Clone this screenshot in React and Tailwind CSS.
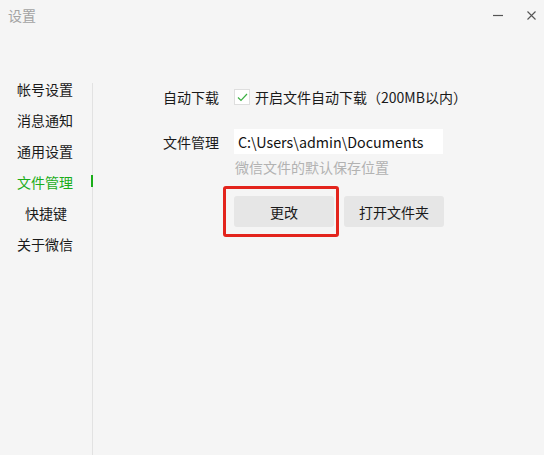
import React from "react";

const menu = [
  { label: "帐号设置" },
  { label: "消息通知" },
  { label: "通用设置" },
  { label: "文件管理", active: true },
  { label: "快捷键", indent: true },
  { label: "关于微信" },
];

const Sidebar = () => {
  return (
    <div className="w-[92px] pt-[43px] flex flex-col">
      {menu.map((item) => (
        <div
          key={item.label}
          className={
            "relative h-[31px] flex items-center " +
            (item.indent ? "pl-[25px] " : "pl-[17px] ") +
            (item.active ? "text-[#1aad19]" : "text-[#1a1a1a]")
          }
        >
          {item.label}
          {item.active && (
            <span className="absolute right-[-1px] top-[9px] w-[2px] h-[12px] bg-[#1aad19]" />
          )}
        </div>
      ))}
    </div>
  );
};

const App = () => {
  return (
    <div className="w-[544px] h-[455px] bg-[#f5f5f5] flex flex-col overflow-hidden text-[14px] leading-[20px] text-[#1a1a1a] font-['Noto_Sans_CJK_SC',sans-serif]">
      <div className="h-[30px] flex items-center justify-between pl-[8px] pr-[8px]">
        <span className="text-[#a3a3a3] -mt-[1px]">设置</span>
        <div className="flex items-center gap-[24px]">
          <svg width="10" height="10" viewBox="0 0 10 10">
            <path d="M0 5.5H10" stroke="#555" strokeWidth="1.2" />
          </svg>
          <svg width="9" height="9" viewBox="0 0 9 9">
            <path d="M0.5 0.5L8.5 8.5M8.5 0.5L0.5 8.5" stroke="#555" strokeWidth="1.1" />
          </svg>
        </div>
      </div>

      <div className="flex flex-1">
        <Sidebar />
        <div className="w-px bg-[#e2e2e2] mt-[53px]" />

        <div className="pl-[70px] pt-[57px] flex flex-col">
          <div className="flex items-center h-[20px]">
            <span className="w-[71px]">自动下载</span>
            <span className="w-[16px] h-[16px] bg-white border border-[#dedede] flex items-center justify-center">
              <svg width="11" height="9" viewBox="0 0 11 9">
                <path d="M1 4.5L4 7.5L10 1" stroke="#3cb043" strokeWidth="1.2" fill="none" />
              </svg>
            </span>
            <span className="ml-[5px]">开启文件自动下载（200MB以内）</span>
          </div>

          <div className="flex items-center mt-[22px]">
            <span className="w-[71px]">文件管理</span>
            <div className="w-[209px] h-[25px] bg-white flex items-center pl-[4px] text-[14.3px] text-[#111]">
              C:\Users\admin\Documents
            </div>
          </div>
          <div className="ml-[72px] mt-[3px] text-[#b2b2b2]">微信文件的默认保存位置</div>

          <div className="ml-[71px] mt-[19px] flex gap-[10px]">
            <div className="relative">
              <button className="w-[100px] h-[31px] bg-[#e6e6e6] rounded-[3px] text-[#1a1a1a]">
                更改
              </button>
              <span className="absolute left-[-11px] top-[-10px] right-[-5px] bottom-[-10px] border-[3px] border-[#e3241c] rounded-[3px]" />
            </div>
            <button className="w-[100px] h-[31px] bg-[#e6e6e6] rounded-[3px] text-[#1a1a1a]">
              打开文件夹
            </button>
          </div>
        </div>
      </div>
    </div>
  );
};

export default App;
